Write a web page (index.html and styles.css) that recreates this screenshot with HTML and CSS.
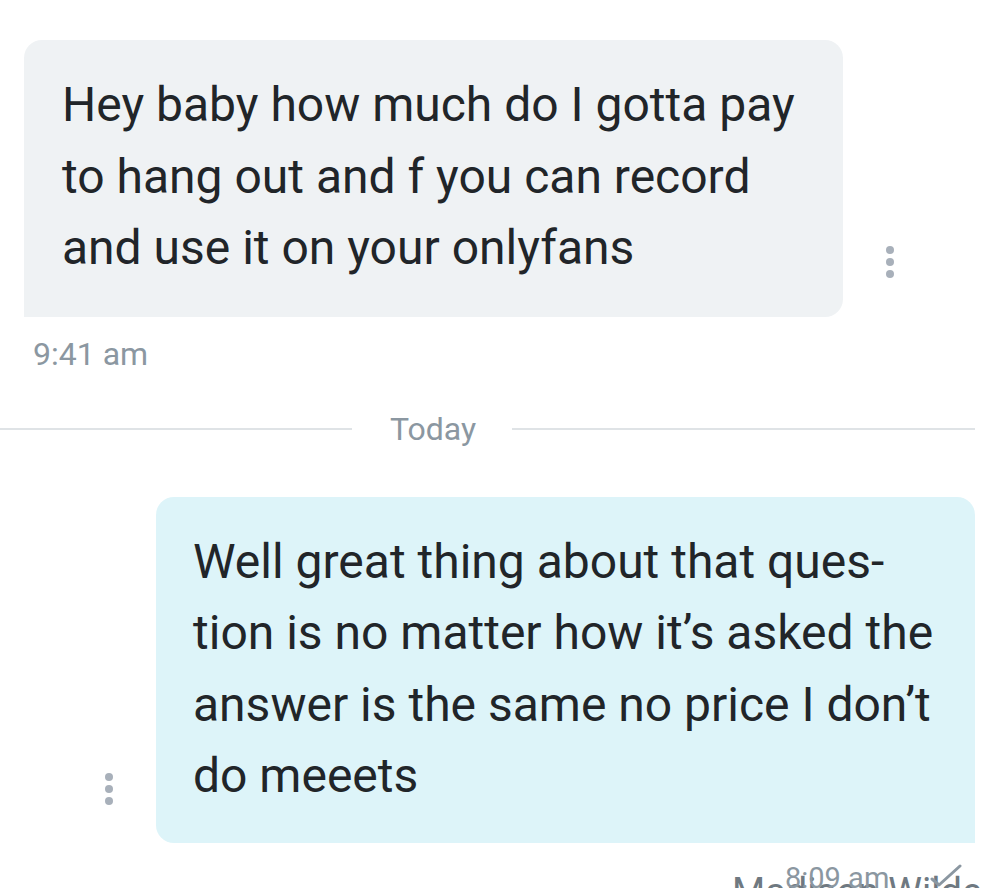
FILE: index.html
```html
<!DOCTYPE html>
<html lang="en">
<head>
  <meta charset="UTF-8" />
  <meta name="viewport" content="width=device-width, initial-scale=1.0"/>
  <title>Chat</title>
  <link rel="stylesheet" href="styles.css">
</head>
<body>

  <div class="chat">

    <div class="msg-row received">
      <div class="bubble">
        Hey baby how much do I gotta pay<br>
        to hang out and f you can record<br>
        and use it on your onlyfans
      </div>
      <div class="more"><span></span><span></span><span></span></div>
    </div>
    <div class="time">9:41 am</div>

    <div class="divider">
      <div class="line first"></div>
      <span class="day">Today</span>
      <div class="line"></div>
    </div>

    <div class="msg-row sent">
      <div class="more"><span></span><span></span><span></span></div>
      <div class="bubble">
        Well great thing about that ques-<br>
        tion is no matter how it’s asked the<br>
        answer is the same no price I don’t<br>
        do meeets
      </div>
    </div>

    <div class="footer">
      <span class="sender">Madison Wilde</span>
      <span class="sent-time">8:09 am</span>
      <svg class="tick" width="34" height="26" viewBox="0 0 34 26">
        <polyline points="2,16 9,22 30,3" fill="none" stroke="#8b97a1" stroke-width="3" stroke-linecap="round" stroke-linejoin="round"/>
      </svg>
    </div>

  </div>

</body>
</html>
```

FILE: styles.css
```css
body {
  margin: 0;
  font-family: Roboto, "Noto Sans", Arial, sans-serif;
  background: #fff;
  color: #212529;
  width: 995px;
  height: 888px;
  overflow: hidden;
}
.chat {
  padding: 40px 20px 0 0;
}
.msg-row {
  display: flex;
  align-items: flex-end;
  gap: 43px;
}
.msg-row.received { padding-left: 24px; }
.msg-row.sent { justify-content: flex-end; }
.bubble {
  width: 819px;
  box-sizing: border-box;
  font-size: 48px;
  line-height: 71.5px;
}
.received .bubble {
  background: #eff2f4;
  border-radius: 18px 18px 18px 0;
  padding: 29px 20px 33px 38px;
}
.sent .bubble {
  background: #ddf4f9;
  border-radius: 18px 18px 0 18px;
  padding: 29px 20px 31px 37px;
}
.more {
  display: flex;
  flex-direction: column;
  gap: 4px;
  width: 8px;
}
.received .more { margin-bottom: 39px; }
.sent .more { margin-bottom: 38px; }
.more span {
  width: 8px;
  height: 8px;
  border-radius: 50%;
  background: #a8b0ba;
}
.time {
  margin: 17px 0 0 33px;
  font-size: 32px;
  line-height: 40px;
  color: #8b97a1;
}
.divider {
  display: flex;
  align-items: center;
  margin-top: 35px;
  height: 40px;
}
.divider .line {
  flex: 1;
  height: 2px;
  background: #dfe3e6;
}
.divider .line.first {
  flex: none;
  width: 352px;
}
.day {
  padding: 0 36px 0 38px;
  font-size: 32px;
  line-height: 40px;
  color: #8b97a1;
}
.msg-row.sent { margin-top: 48px; }
.footer {
  position: relative;
  height: 45px;
  margin-top: 15px;
}
.sender {
  position: absolute;
  left: 732px;
  top: 15px;
  font-size: 38px;
  line-height: 38px;
  color: #6f7981;
  white-space: nowrap;
}
.sent-time {
  position: absolute;
  left: 785px;
  top: 6px;
  font-size: 29px;
  line-height: 29px;
  color: #8b97a1;
}
.tick {
  position: absolute;
  left: 930px;
  top: 5px;
}
```
